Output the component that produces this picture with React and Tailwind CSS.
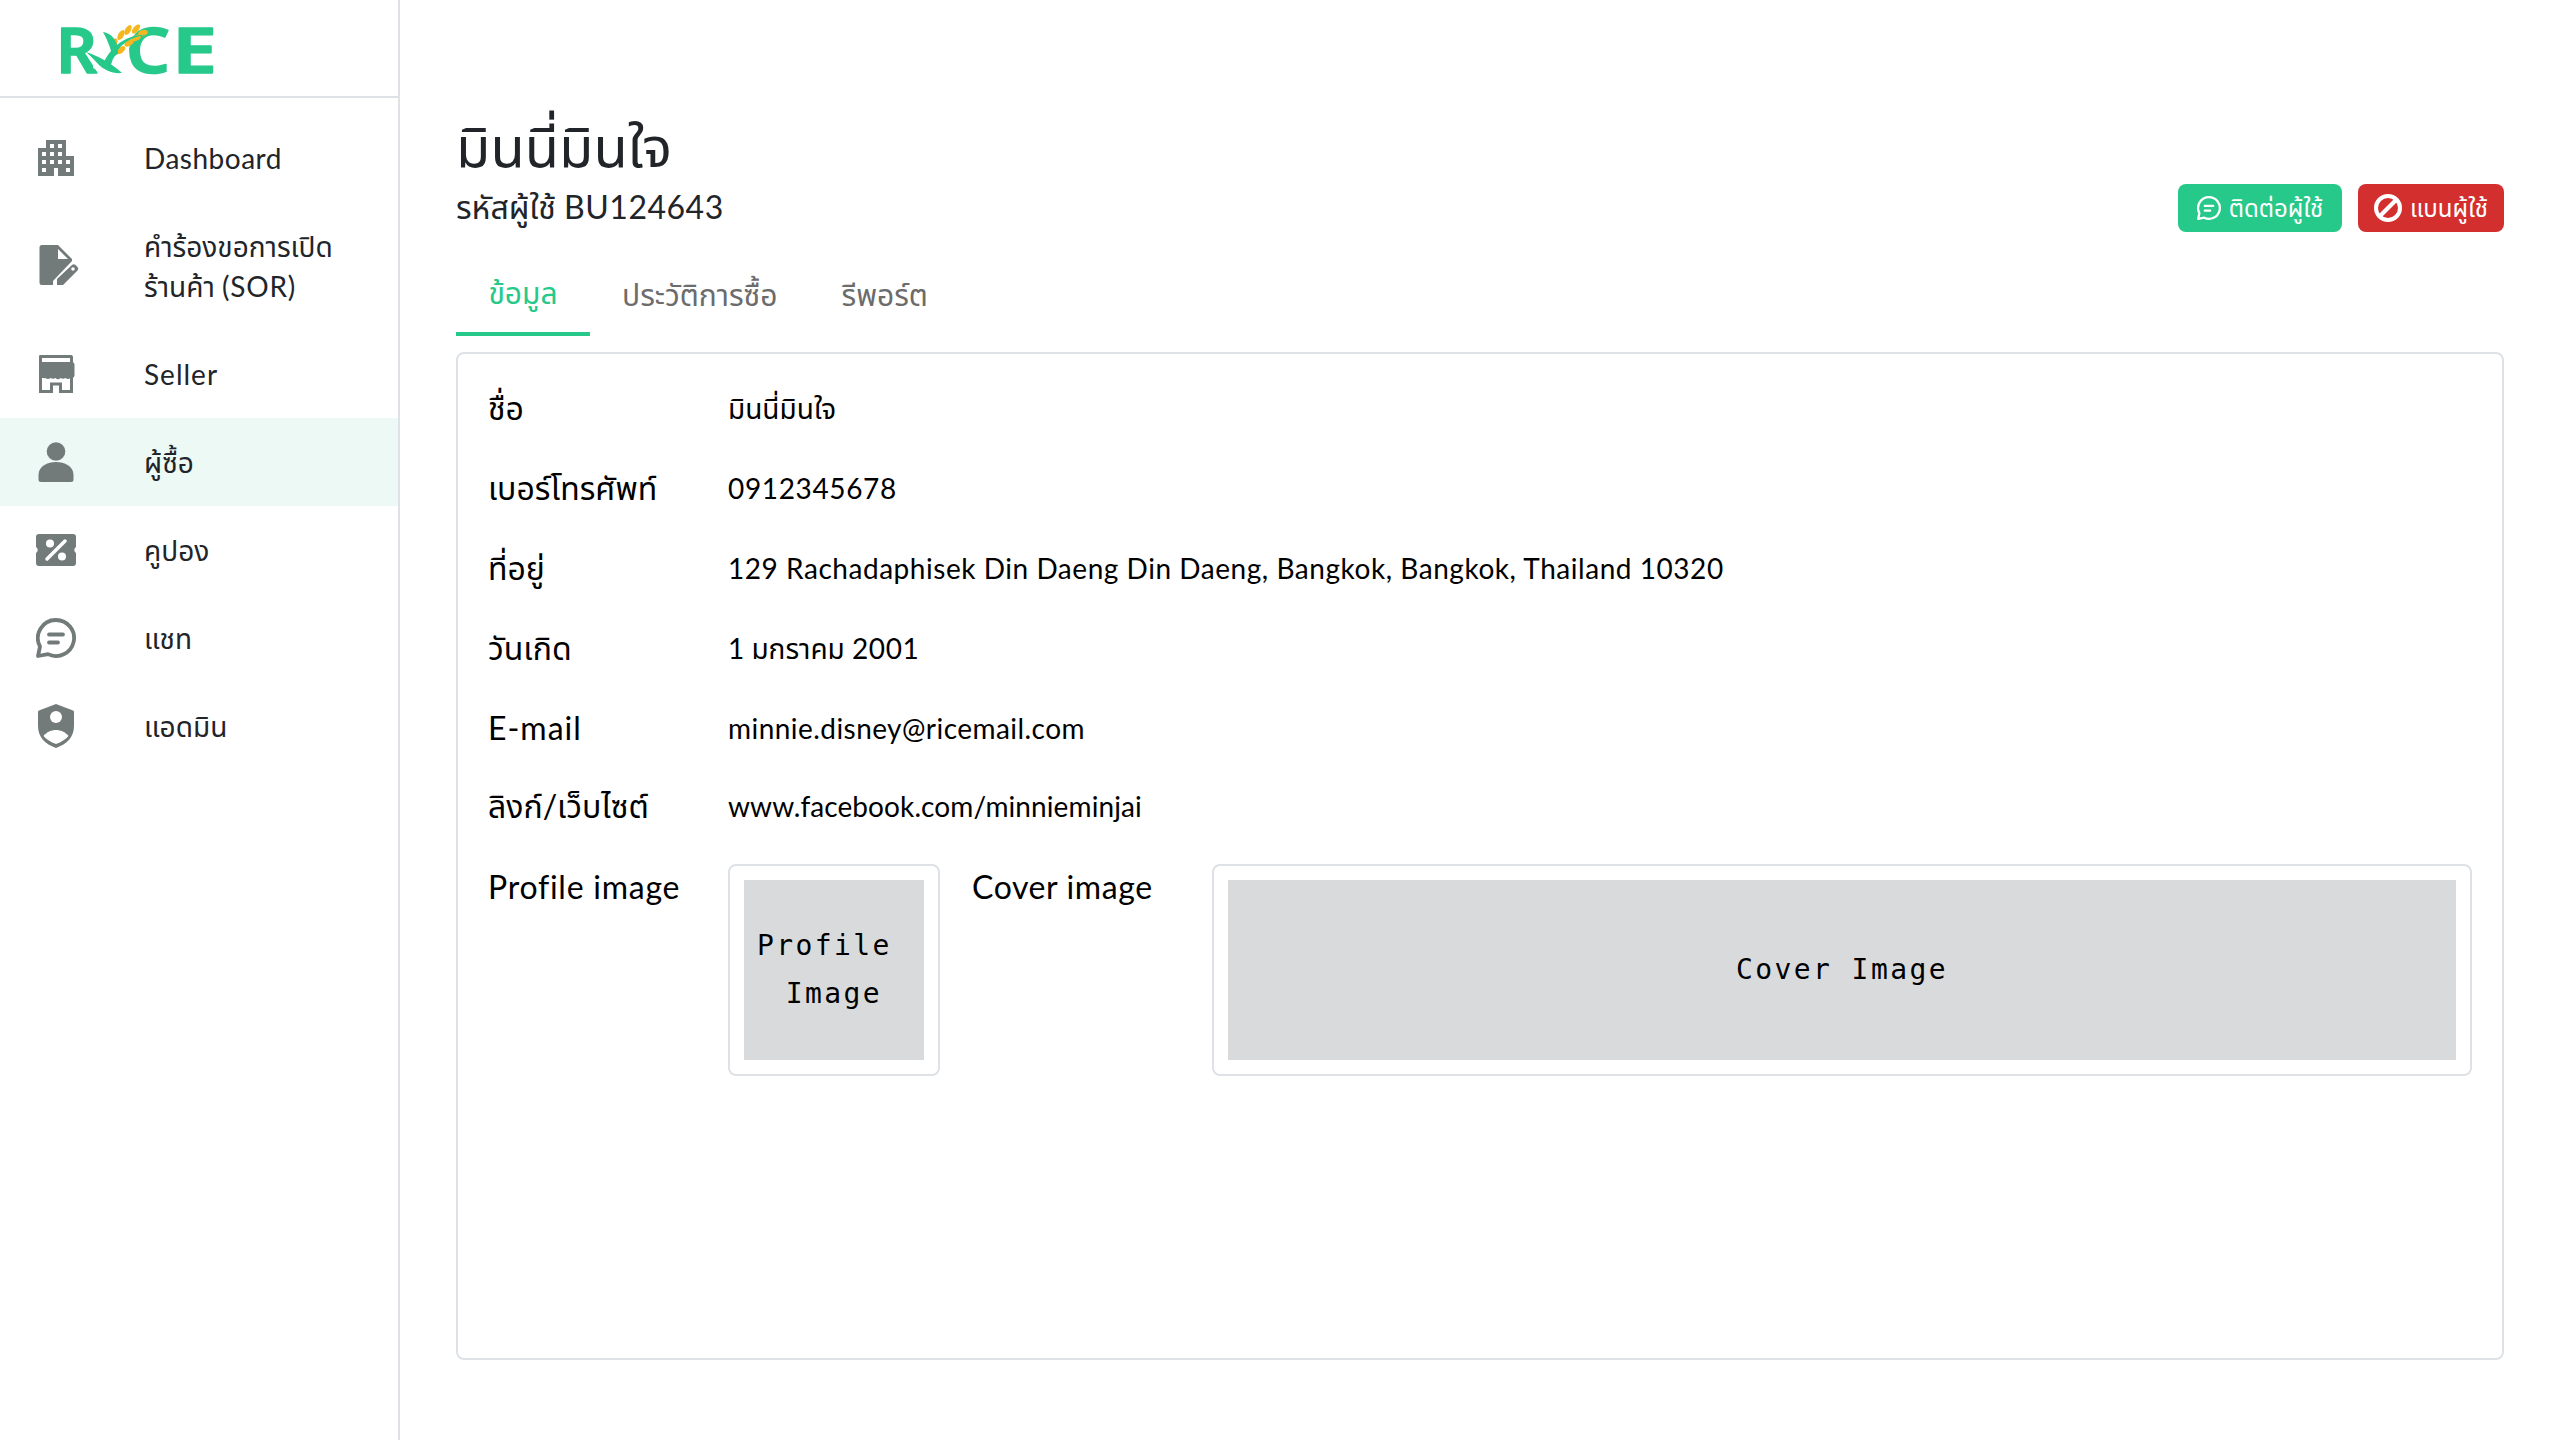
import React from 'react';
import { MdApartment } from 'react-icons/md';

const FONT = "font-['Lato','Noto_Sans','Noto_Sans_Thai',sans-serif]";

const IconDoc = () => (
  <svg viewBox="0 0 48 48" className="w-12 h-12" fill="#727a7a">
    <path d="M10 3h16l14 14v2L21 39v4H10a2.500 2.500 0 0 1-2.500-2.500v-35A2.500 2.500 0 0 1 10 3z" />
    <path d="M26 7v10h10z" fill="#fff" />
    <path d="M25 43v-6l15-14a2.500 2.500 0 0 1 3.500 0l2 2a2.500 2.500 0 0 1 0 3.500L31 43z" />
    <circle cx="41" cy="27" r="1.800" fill="#fff" />
  </svg>
);
const IconStore = () => (
  <svg viewBox="0 0 48 48" className="w-12 h-12" fill="#727a7a">
    <path fillRule="evenodd" d="M8.500 5h31A2 2 0 0 1 41 7v36H7V7a1.500 1.500 0 0 1 1.500-2zM10 8v4h28V8zm0 20v12h8V32.500h12V40h8V28z" />
    <path d="M7 12h34l1.500 2v11.500a3 3 0 0 1-4 2.500 4 4 0 0 1-5 0 4.500 4.500 0 0 1-5 0 3.500 3.500 0 0 1-5 0 4.500 4.500 0 0 1-5 0 4 4 0 0 1-5 0 3 3 0 0 1-4-2.500V14z" />
    <path d="M21 35.500h6V43h-6z" fill="#fff" />
  </svg>
);
const IconPerson = () => (
  <svg viewBox="0 0 40 40" className="w-10 h-10" fill="#727a7a">
    <circle cx="20" cy="9.500" r="9.300" />
    <path d="M2.500 33c0-9 9-13 17.500-13s17.500 4 17.500 13v4.500A2.500 2.500 0 0 1 35 40H5a2.500 2.500 0 0 1-2.500-2.500z" />
  </svg>
);
const IconCoupon = () => (
  <svg viewBox="0 0 40 32" className="w-10 h-8" fill="#727a7a">
    <path d="M3 0h34a3 3 0 0 1 3 3v10a3.500 3.500 0 0 0 0 6v10a3 3 0 0 1-3 3H3a3 3 0 0 1-3-3V19a3.500 3.500 0 0 0 0-6V3a3 3 0 0 1 3-3z" />
    <circle cx="14" cy="9.500" r="4" fill="#fff" />
    <circle cx="26" cy="22.500" r="4" fill="#fff" />
    <path d="M11 25L29 7" stroke="#fff" strokeWidth="3.500" strokeLinecap="round" />
  </svg>
);
const IconChat = ({ color = '#727a7a', size = 'w-10 h-10' }) => (
  <svg viewBox="0 0 40 40" className={size} fill="none" stroke={color} strokeWidth="3.800">
    <path d="M20 2a18 18 0 1 1-8 34.100L2 38l2-9.500A18 18 0 0 1 20 2z" strokeLinejoin="round" />
    <path d="M13 16.500h14M13 24.500h9" strokeLinecap="round" />
  </svg>
);
const IconShield = () => (
  <svg viewBox="0 0 40 44" className="w-10 h-11" fill="#727a7a">
    <path d="M20 0l17 6.500a1.500 1.500 0 0 1 1 1.500v14c0 11-7 18-18 22C9 40 2 33 2 22V8a1.500 1.500 0 0 1 1-1.500z" />
    <circle cx="20" cy="13" r="6" fill="#fff" />
    <path d="M7.500 32c3-4 8-6 12.500-6s9.500 2 12.500 6c-3 3.500-7 6-12.500 8-5.500-2-9.500-4.500-12.500-8z" fill="#fff" />
  </svg>
);
const IconBan = () => (
  <svg viewBox="0 0 28 28" className="w-7 h-7" fill="none" stroke="#fff" strokeWidth="4">
    <circle cx="14" cy="14" r="12" />
    <path d="M6 22L22 6" />
  </svg>
);

// coordinates are page pixels, the svg fills the logo bar
const Logo = () => (
  <svg viewBox="0 0 240 96" className="w-[240px] h-[96px] block">
    <g fontFamily="'Noto Sans', sans-serif" fontSize="64" fontWeight="600" fill="#26c98a" stroke="#26c98a" strokeWidth="1.500" strokeLinejoin="round">
      <text x="56" y="72.500">R</text>
      <text x="126" y="72.500" textLength="44" lengthAdjust="spacingAndGlyphs">C</text>
      <text x="172" y="72.500" textLength="45" lengthAdjust="spacingAndGlyphs">E</text>
    </g>
    <path d="M97 44l10-14 26 2-6 24-22 18-12-6z" fill="#fff" />
    <g fill="#f5b71f">
      <ellipse cx="114" cy="43" rx="2.800" ry="5" transform="rotate(30 114 43)" />
      <ellipse cx="121" cy="35" rx="2.800" ry="5.500" transform="rotate(30 121 35)" />
      <ellipse cx="128" cy="30" rx="2.800" ry="5.500" transform="rotate(30 128 30)" />
      <ellipse cx="136" cy="29" rx="2.800" ry="5.500" transform="rotate(40 136 29)" />
      <ellipse cx="143" cy="33" rx="5" ry="3" transform="rotate(-15 143 33)" />
      <ellipse cx="136" cy="38" rx="5" ry="2.800" transform="rotate(-25 136 38)" />
      <ellipse cx="129" cy="43" rx="5" ry="2.800" transform="rotate(-30 129 43)" />
      <ellipse cx="121" cy="50" rx="5" ry="2.800" transform="rotate(-40 121 50)" />
    </g>
    <path d="M148 35C130 36 114 46 110 70l-8-3c6-18 24-34 46-32z" fill="#26c98a" />
    <path d="M103 32c9 1 16 10 15 22-3 1-4 3-5 5-2-10-5-18-10-27z" fill="#26c98a" />
    <path d="M86 52c12 4 24 10 36 21-10 1-17-3-23-8-4-4-8-9-13-13z" fill="#26c98a" />
  </svg>
);

const menu = [
  { label: <span className="tracking-[0.5px]">Dashboard</span>, icon: <MdApartment size={48} color="#727a7a" />, pad: 'pl-8', height: 'h-[88px]' },
  { label: <>คำร้องขอการเปิด<br />ร้านค้า <span className="tracking-[0.8px]">(SOR)</span></>, icon: <IconDoc />, pad: 'pl-8', height: 'h-[128px]' },
  { label: <span className="tracking-[1px]">Seller</span>, icon: <IconStore />, pad: 'pl-8', height: 'h-[88px]' },
  { label: 'ผู้ซื้อ', icon: <IconPerson />, pad: 'pl-9', height: 'h-[88px]', active: true },
  { label: 'คูปอง', icon: <IconCoupon />, pad: 'pl-9', height: 'h-[88px]' },
  { label: 'แชท', icon: <IconChat />, pad: 'pl-9', height: 'h-[88px]' },
  { label: 'แอดมิน', icon: <IconShield />, pad: 'pl-9', height: 'h-[88px]' },
];

const rows = [
  { label: 'ชื่อ', value: 'มินนี่มินใจ', height: 'h-[80px]' },
  { label: 'เบอร์โทรศัพท์', value: <span className="tracking-[0.65px]">0912345678</span>, height: 'h-[80px]' },
  { label: 'ที่อยู่', value: <span className="tracking-[0.54px]">129 Rachadaphisek Din Daeng Din Daeng, Bangkok, Bangkok, Thailand 10320</span>, height: 'h-[80px]' },
  { label: 'วันเกิด', value: <>1 มกราคม <span className="tracking-[0.6px]">2001</span></>, height: 'h-[80px]' },
  { label: <span className="tracking-[1px]">E-mail</span>, value: <span className="tracking-[0.45px]">minnie.disney@ricemail.com</span>, height: 'h-[80px]' },
  { label: 'ลิงก์/เว็บไซต์', value: <span className="tracking-[0.1px]">www.facebook.com/minnieminjai</span>, height: 'h-[76px]' },
];

const App = () => {
  return (
    <div className={`flex h-screen bg-white text-[#212529] ${FONT}`}>
      {/* Sidebar */}
      <aside className="w-[400px] shrink-0 border-r-2 border-[#dee2e6]">
        <div className="h-[98px] border-b-2 border-[#dee2e6]">
          <Logo />
        </div>
        <nav className="pt-4">
          {menu.map((item, i) => (
            <div key={i} className={`flex items-center ${item.height} ${item.active ? 'bg-[#ecf9f5]' : ''}`}>
              <div className={`w-[144px] ${item.pad} shrink-0 flex items-center`}>{item.icon}</div>
              <div className="text-[28px] leading-10">{item.label}</div>
            </div>
          ))}
        </nav>
      </aside>

      {/* Content */}
      <main className="flex-1 pl-[56px] pr-[56px] pt-[112px]">
        <div className="flex justify-between items-end">
          <div>
            <h1 className="text-[56px] leading-[68px] font-normal">มินนี่มินใจ</h1>
            <p className="text-[32px] leading-[40px] mt-[7px]">รหัสผู้ใช้ <span className="tracking-[0.5px]">BU124643</span></p>
          </div>
          <div className="flex gap-4 mb-[-5px]">
            <button className="h-12 w-[164px] rounded-lg bg-[#26c98a] text-white text-[24px] flex items-center justify-center gap-2">
              <IconChat color="#fff" size="w-6 h-6" />
              ติดต่อผู้ใช้
            </button>
            <button className="h-12 w-[146px] rounded-lg bg-[#d32f2f] text-white text-[24px] flex items-center justify-center gap-2">
              <IconBan />
              แบนผู้ใช้
            </button>
          </div>
        </div>

        <div className="flex mt-[25px] text-[30px]">
          <div className="h-[84px] w-[134px] flex items-center justify-center border-b-4 border-[#26c98a] text-[#26c98a]">ข้อมูล</div>
          <div className="h-[84px] px-8 flex items-center text-[#6c6c6c]">ประวัติการซื้อ</div>
          <div className="h-[84px] px-8 flex items-center text-[#6c6c6c]">รีพอร์ต</div>
        </div>

        {/* Info card */}
        <div className="mt-4 h-[1008px] border-2 border-[#dee2e6] rounded-lg px-[30px] pt-[14px] text-black">
          {rows.map((row, i) => (
            <div key={i} className={`flex items-center ${row.height}`}>
              <div className="w-[240px] text-[32px] shrink-0">{row.label}</div>
              <div className="text-[28px]">{row.value}</div>
            </div>
          ))}
          <div className="flex mt-[20px]">
            <div className="w-[240px] text-[32px] leading-10 pt-[3px] shrink-0 tracking-[0.75px]">Profile image</div>
            <div className="w-[212px] h-[212px] p-[14px] border-2 border-[#dee2e6] rounded-lg shrink-0">
              <div className="w-full h-full bg-[#d9dadc] flex items-center justify-center text-center font-['DejaVu_Sans_Mono',monospace] text-[28px] leading-[48px] tracking-[2.400px]">
                <div>Profile&nbsp;<br />Image</div>
              </div>
            </div>
            <div className="w-[240px] ml-8 text-[32px] leading-10 pt-[3px] shrink-0 tracking-[0.6px]">Cover image</div>
            <div className="flex-1 h-[212px] p-[14px] border-2 border-[#dee2e6] rounded-lg">
              <div className="w-full h-full bg-[#d9dadc] flex items-center justify-center font-['DejaVu_Sans_Mono',monospace] text-[28px] tracking-[2.400px]">
                Cover Image
              </div>
            </div>
          </div>
        </div>
      </main>
    </div>
  );
};

export default App;
